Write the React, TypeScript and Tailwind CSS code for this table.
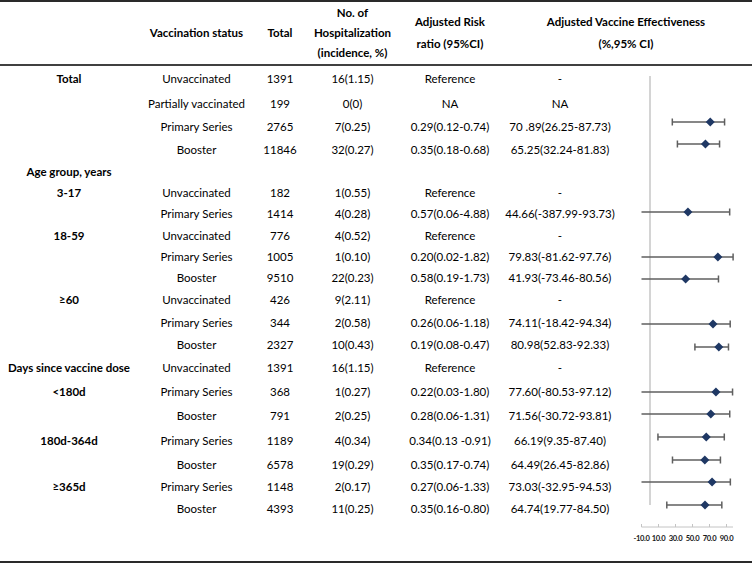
import React from "react";

type Row = {
  h: string;
  c1?: string;
  c2?: string;
  c3?: string;
  c4?: string;
  c5?: string;
  c6?: string;
};

const rows: Row[] = [
  { h: "h-[26px]", c1: "Total", c2: "Unvaccinated", c3: "1391", c4: "16(1.15)", c5: "Reference", c6: "-" },
  { h: "h-[23px]", c2: "Partially vaccinated", c3: "199", c4: "0(0)", c5: "NA", c6: "NA" },
  { h: "h-[24px]", c2: "Primary Series", c3: "2765", c4: "7(0.25)", c5: "0.29(0.12-0.74)", c6: "70 .89(26.25-87.73)" },
  { h: "h-[22px]", c2: "Booster", c3: "11846", c4: "32(0.27)", c5: "0.35(0.18-0.68)", c6: "65.25(32.24-81.83)" },
  { h: "h-[21px]", c1: "Age group, years" },
  { h: "h-[21px]", c1: "3-17", c2: "Unvaccinated", c3: "182", c4: "1(0.55)", c5: "Reference", c6: "-" },
  { h: "h-[22px]", c2: "Primary Series", c3: "1414", c4: "4(0.28)", c5: "0.57(0.06-4.88)", c6: "44.66(-387.99-93.73)" },
  { h: "h-[21px]", c1: "18-59", c2: "Unvaccinated", c3: "776", c4: "4(0.52)", c5: "Reference", c6: "-" },
  { h: "h-[21px]", c2: "Primary Series", c3: "1005", c4: "1(0.10)", c5: "0.20(0.02-1.82)", c6: "79.83(-81.62-97.76)" },
  { h: "h-[22px]", c2: "Booster", c3: "9510", c4: "22(0.23)", c5: "0.58(0.19-1.73)", c6: "41.93(-73.46-80.56)" },
  { h: "h-[22px]", c1: "≥60", c2: "Unvaccinated", c3: "426", c4: "9(2.11)", c5: "Reference", c6: "-" },
  { h: "h-[23px]", c2: "Primary Series", c3: "344", c4: "2(0.58)", c5: "0.26(0.06-1.18)", c6: "74.11(-18.42-94.34)" },
  { h: "h-[22px]", c2: "Booster", c3: "2327", c4: "10(0.43)", c5: "0.19(0.08-0.47)", c6: "80.98(52.83-92.33)" },
  { h: "h-[24px]", c1: "Days since vaccine dose", c2: "Unvaccinated", c3: "1391", c4: "16(1.15)", c5: "Reference", c6: "-" },
  { h: "h-[23px]", c1: "<180d", c2: "Primary Series", c3: "368", c4: "1(0.27)", c5: "0.22(0.03-1.80)", c6: "77.60(-80.53-97.12)" },
  { h: "h-[25px]", c2: "Booster", c3: "791", c4: "2(0.25)", c5: "0.28(0.06-1.31)", c6: "71.56(-30.72-93.81)" },
  { h: "h-[26px]", c1: "180d-364d", c2: "Primary Series", c3: "1189", c4: "4(0.34)", c5: "0.34(0.13 -0.91)", c6: "66.19(9.35-87.40)" },
  { h: "h-[22px]", c2: "Booster", c3: "6578", c4: "19(0.29)", c5: "0.35(0.17-0.74)", c6: "64.49(26.45-82.86)" },
  { h: "h-[22px]", c1: "≥365d", c2: "Primary Series", c3: "1148", c4: "2(0.17)", c5: "0.27(0.06-1.33)", c6: "73.03(-32.95-94.53)" },
  { h: "h-[22px]", c2: "Booster", c3: "4393", c4: "11(0.25)", c5: "0.35(0.16-0.80)", c6: "64.74(19.77-84.50)" },
];

// chart markers: [absolute y, estimate, low, high]
const markers: [number, number, number, number][] = [
  [122, 70.89, 26.25, 87.73],
  [144, 65.25, 32.24, 81.83],
  [212, 44.66, -387.99, 93.73],
  [257, 79.83, -81.62, 97.76],
  [279, 41.93, -73.46, 80.56],
  [324, 74.11, -18.42, 94.34],
  [347, 80.98, 52.83, 92.33],
  [392, 77.6, -80.53, 97.12],
  [414, 71.56, -30.72, 93.81],
  [437, 66.19, 9.35, 87.4],
  [460, 64.49, 26.45, 82.86],
  [482, 73.03, -32.95, 94.53],
  [505, 64.74, 19.77, 84.5],
];

const MIN = -10;
const xOf = (v: number) => 30 + 0.85 * Math.max(v, MIN);

function Chart() {
  const ticks = [-10, 10, 30, 50, 70, 90];
  return (
    <svg width={132} height={495} viewBox="0 0 132 495">
      <line x1={30} y1={10} x2={30} y2={439} stroke="#d4d4d4" strokeWidth={2} />
      {markers.map(([ay, est, lo, hi], i) => {
        const y = ay - 66;
        const xl = xOf(lo);
        const xh = xOf(hi);
        const xe = xOf(est);
        return (
          <g key={i}>
            <line x1={xl} y1={y} x2={xh} y2={y} stroke="#5f5f5f" strokeWidth={1.5} />
            {lo > MIN && <line x1={xl} y1={y - 3.5} x2={xl} y2={y + 3.5} stroke="#5f5f5f" strokeWidth={1.5} />}
            <line x1={xh} y1={y - 3.5} x2={xh} y2={y + 3.5} stroke="#5f5f5f" strokeWidth={1.5} />
            <polygon
              points={`${xe},${y - 4.5} ${xe + 4.5},${y} ${xe},${y + 4.5} ${xe - 4.5},${y}`}
              fill="#1f3864"
            />
          </g>
        );
      })}
      <line x1={21.5} y1={461} x2={113} y2={461} stroke="#c4c4c4" strokeWidth={1} />
      {ticks.map((t) => (
        <line key={t} x1={xOf(t)} y1={458} x2={xOf(t)} y2={461} stroke="#c4c4c4" strokeWidth={1} />
      ))}
      {ticks.map((t) => (
        <text
          key={`l${t}`}
          x={xOf(t)}
          y={474.5}
          textAnchor="middle"
          fontSize={7.6}
          fontWeight={700}
          fill="#1a1a1a"
          fontFamily="Lato, sans-serif"
          letterSpacing={-0.35}
        >
          {t.toFixed(1)}
        </text>
      ))}
    </svg>
  );
}

export default function App() {
  return (
    <div className="w-[752px] h-[563px] bg-white text-black font-['Lato',sans-serif] text-[11.5px] leading-none flex flex-col overflow-hidden">
      <div className="h-[2px] bg-[#2a2a2a] shrink-0" />
      <div className="h-[62px] shrink-0 grid grid-cols-[138px_117px_50px_95px_100px_252px] items-center font-bold text-center">
        <div />
        <div>Vaccination status</div>
        <div>Total</div>
        <div className="flex flex-col leading-[20px]">
          <span>No. of</span>
          <span>Hospitalization</span>
          <span>(incidence, %)</span>
        </div>
        <div className="flex flex-col leading-[22px]">
          <span>Adjusted Risk</span>
          <span>ratio (95%CI)</span>
        </div>
        <div className="flex flex-col leading-[22px]">
          <span>Adjusted Vaccine Effectiveness</span>
          <span>(%,95% CI)</span>
        </div>
      </div>
      <div className="h-[2px] bg-[#404040] shrink-0" />
      <div className="h-[495px] shrink-0 flex">
        <div className="w-[620px] flex flex-col">
          {rows.map((r, i) => (
            <div
              key={i}
              className={`${r.h} grid grid-cols-[138px_117px_50px_95px_100px_120px] items-center text-center whitespace-nowrap`}
            >
              <div className="font-bold">{r.c1 ?? ""}</div>
              <div>{r.c2 ?? ""}</div>
              <div>{r.c3 ?? ""}</div>
              <div>{r.c4 ?? ""}</div>
              <div>{r.c5 ?? ""}</div>
              <div>{r.c6 ?? ""}</div>
            </div>
          ))}
        </div>
        <div className="w-[132px]">
          <Chart />
        </div>
      </div>
      <div className="h-[2px] bg-[#2a2a2a] shrink-0" />
    </div>
  );
}
